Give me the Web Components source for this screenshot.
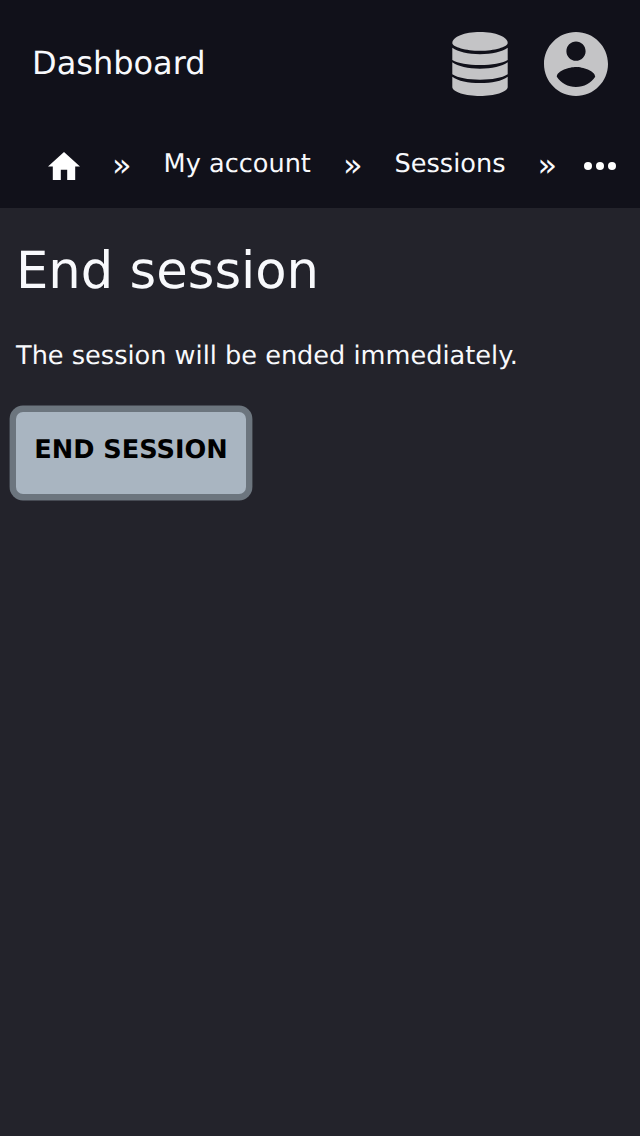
<!DOCTYPE html>
<html lang="en"><head><meta charset="utf-8"><title>End session</title>
<style>body{margin:0;background:#23232b;color:#f8f9fc;font-family:"DejaVu Sans",sans-serif;text-rendering:geometricPrecision}</style></head>
<body><dash-app></dash-app>
<script>
const define = (name, html) => customElements.define(name, class extends HTMLElement {
  constructor() { super(); this.attachShadow({mode: 'open'}).innerHTML = html; }
});
define('dash-header', `<style>
:host{display:flex;align-items:center;height:128px;padding:0 32px;box-sizing:border-box}
.t{flex:1;font-size:32px;line-height:38px;margin-top:-2px}
svg{width:64px;height:64px;fill:#c4c4c6;margin-left:32px;display:block}
</style><div class="t"><slot></slot></div>
<svg viewBox="0 0 64 64"><path d="M4.300 11C4.300 4.900 16.500 0 32 0S59.700 4.900 59.700 11C59.700 15 46 18.800 32 18.800S4.300 15 4.300 11z"/><path d="M4.300 15.800C10 20 20 22.200 32 22.200S54 20 59.700 15.800V28C54 31.300 44 33 32 33S10 31.300 4.300 28z"/><path d="M4.300 30.300C10 34.500 20 36.700 32 36.700S54 34.500 59.700 30.300V42.300C54 46 44 47.700 32 47.700S10 46 4.300 42.300z"/><path d="M4.300 44.700C10 49 20 51 32 51S54 49 59.700 44.700V55C59.700 60 46 64 32 64S4.300 60 4.300 55z"/></svg>
<svg viewBox="2 2 20 20"><path d="M12 2C6.480 2 2 6.480 2 12s4.480 10 10 10 10-4.480 10-10S17.520 2 12 2zm0 3c1.660 0 3 1.340 3 3s-1.340 3-3 3-3-1.340-3-3 1.340-3 3-3zm0 14.200c-2.500 0-4.710-1.280-6-3.220.03-1.990 4-3.080 6-3.080 1.990 0 5.970 1.090 6 3.080-1.290 1.940-3.500 3.220-6 3.220z"/></svg>`);
define('dash-breadcrumbs', `<style>
:host{display:flex;height:80px;padding-left:48px;box-sizing:border-box;align-items:flex-start;font-size:25.6px;line-height:30px;white-space:nowrap;padding-top:21px}
svg{display:block;width:32px;height:32px;fill:#fff;flex:none}.dots{margin-top:-1px}
.sep{margin:1px 32px 0;font-size:32px}.s3{margin-right:27px}
</style><svg viewBox="0 0 24 24"><path d="M10 20.500v-6.500h4v6.500h5V12h3L12 3 2 12h3v8.500z" transform="translate(-2.400 -1.300) scale(1.200)"/></svg><span class="sep">»</span><span>My account</span><span class="sep">»</span><span>Sessions</span><span class="sep s3">»</span><svg class="dots" viewBox="0 0 32 32"><circle cx="4" cy="18" r="4"/><circle cx="16" cy="18" r="4"/><circle cx="28" cy="18" r="4"/></svg>`);
define('dash-button', `<style>
:host{display:block}
button{display:block;width:230px;height:82px;padding:0 0 6px;border:0;border-radius:7px;background:#a9b5c1;color:#000;box-shadow:0 0 0 6.400px #6c757e;font:bold 25.6px/30px "DejaVu Sans",sans-serif;white-space:nowrap;text-rendering:inherit}
</style><button><slot></slot></button>`);
define('dash-app', `<style>
:host{display:block;min-height:1136px}.top{background:#11111a}
main{padding:33px 16px}h1{margin:0;font-weight:400;font-size:51.2px;line-height:60px}p{margin:40px 0 0;font-size:25.6px;line-height:30px}
dash-button{margin-top:41px}
</style><div class="top"><dash-header>Dashboard</dash-header><dash-breadcrumbs></dash-breadcrumbs></div>
<main><h1>End session</h1><p>The session will be ended immediately.</p><dash-button>END SESSION</dash-button></main>`);
</script></body></html>
